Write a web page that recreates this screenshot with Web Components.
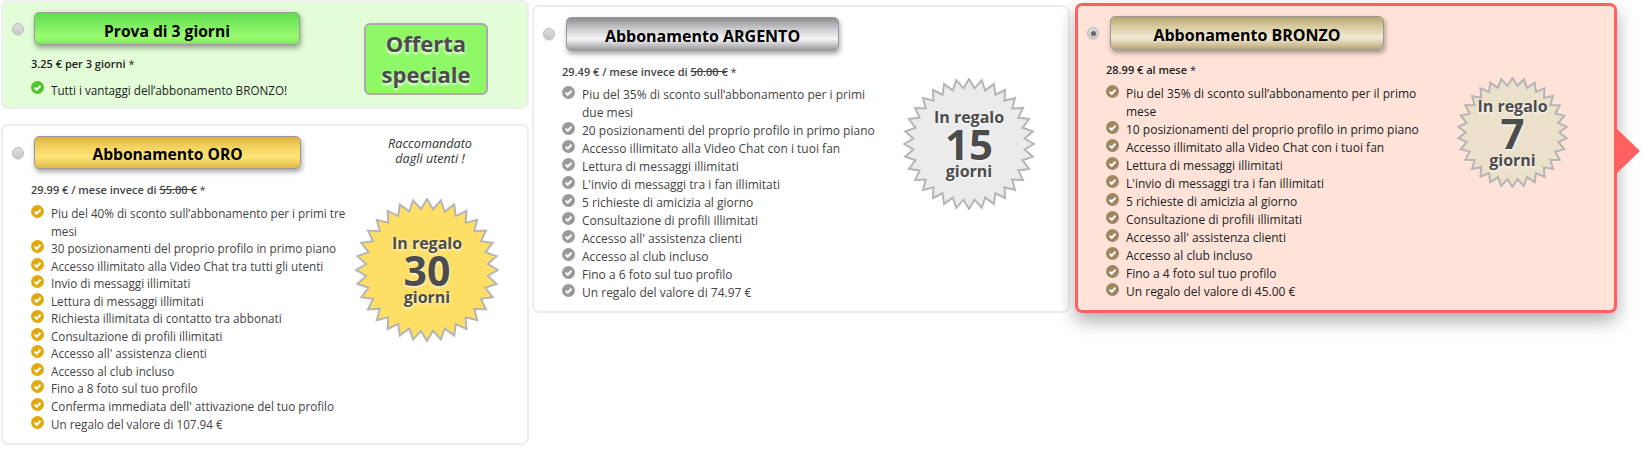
<!DOCTYPE html>
<html>
<head>
<meta charset="utf-8">
<style>
  html, body { margin: 0; background: #fff; }
  body { font-family: "Open Sans", sans-serif; width: 1642px; height: 466px; overflow: hidden; }
</style>
</head>
<body>
<plan-page>
  <div slot="one">
    <plan-card kind="trial" style="height:109px;width:528px">
      <plan-head title="Prova di 3 giorni" kind="trial" slot="head"></plan-head>
      <plan-price slot="price">3.25 € per 3 giorni <i>*</i></plan-price>
      <check-item color="#4fc52c">Tutti i vantaggi dell’abbonamento BRONZO!</check-item>
      <offer-box slot="over">Offerta<br>speciale</offer-box>
    </plan-card>
    <plan-card kind="gold" style="height:321px;width:528px;margin-top:15px">
      <plan-head title="Abbonamento ORO" kind="gold" slot="head"></plan-head>
      <plan-price slot="price">29.99 € / mese invece di <s>55.00 €</s> <i>*</i></plan-price>
      <check-item color="#e0aa0f">Piu del 40% di sconto sull’abbonamento per i primi tre mesi</check-item>
      <check-item color="#e0aa0f">30 posizionamenti del proprio profilo in primo piano</check-item>
      <check-item color="#e0aa0f">Accesso illimitato alla Video Chat tra tutti gli utenti</check-item>
      <check-item color="#e0aa0f">Invio di messaggi illimitati</check-item>
      <check-item color="#e0aa0f">Lettura di messaggi illimitati</check-item>
      <check-item color="#e0aa0f">Richiesta illimitata di contatto tra abbonati</check-item>
      <check-item color="#e0aa0f">Consultazione di profili illimitati</check-item>
      <check-item color="#e0aa0f">Accesso all' assistenza clienti</check-item>
      <check-item color="#e0aa0f">Accesso al club incluso</check-item>
      <check-item color="#e0aa0f">Fino a 8 foto sul tuo profilo</check-item>
      <check-item color="#e0aa0f">Conferma immediata dell' attivazione del tuo profilo</check-item>
      <check-item color="#e0aa0f">Un regalo del valore di 107.94 €</check-item>
      <span slot="over" style="position:absolute;left:362px;top:10px;width:130px;text-align:center;font:italic 12.6px/15px 'Open Sans',sans-serif;color:#333">Raccomandato<br>dagli utenti !</span>
      <gift-star slot="over" days="30" size="144" spikes="32" fill="#fddf66" num="41" style="left:352px;top:72px"></gift-star>
    </plan-card>
  </div>
  <plan-card slot="two" kind="silver" style="height:308px;width:538px">
    <plan-head title="Abbonamento ARGENTO" kind="silver" slot="head"></plan-head>
    <plan-price slot="price">29.49 € / mese invece di <s>50.00 €</s> <i>*</i></plan-price>
    <check-item color="#999">Piu del 35% di sconto sull’abbonamento per i primi due mesi</check-item>
    <check-item color="#999">20 posizionamenti del proprio profilo in primo piano</check-item>
    <check-item color="#999">Accesso illimitato alla Video Chat con i tuoi fan</check-item>
    <check-item color="#999">Lettura di messaggi illimitati</check-item>
    <check-item color="#999">L'invio di messaggi tra i fan illimitati</check-item>
    <check-item color="#999">5 richieste di amicizia al giorno</check-item>
    <check-item color="#999">Consultazione di profili illimitati</check-item>
    <check-item color="#999">Accesso all' assistenza clienti</check-item>
    <check-item color="#999">Accesso al club incluso</check-item>
    <check-item color="#999">Fino a 6 foto sul tuo profilo</check-item>
    <check-item color="#999">Un regalo del valore di 74.97 €</check-item>
    <gift-star slot="over" days="15" size="132" spikes="32" fill="#ebebeb" num="42" style="left:369px;top:71px"></gift-star>
  </plan-card>
  <plan-card slot="three" kind="bronze" style="height:310px;width:542px">
    <plan-head title="Abbonamento BRONZO" kind="bronze" checked slot="head"></plan-head>
    <plan-price slot="price">28.99 € al mese <i>*</i></plan-price>
    <check-item color="#a08660">Piu del 35% di sconto sull’abbonamento per il primo mese</check-item>
    <check-item color="#a08660">10 posizionamenti del proprio profilo in primo piano</check-item>
    <check-item color="#a08660">Accesso illimitato alla Video Chat con i tuoi fan</check-item>
    <check-item color="#a08660">Lettura di messaggi illimitati</check-item>
    <check-item color="#a08660">L'invio di messaggi tra i fan illimitati</check-item>
    <check-item color="#a08660">5 richieste di amicizia al giorno</check-item>
    <check-item color="#a08660">Consultazione di profili illimitati</check-item>
    <check-item color="#a08660">Accesso all' assistenza clienti</check-item>
    <check-item color="#a08660">Accesso al club incluso</check-item>
    <check-item color="#a08660">Fino a 4 foto sul tuo profilo</check-item>
    <check-item color="#a08660">Un regalo del valore di 45.00 €</check-item>
    <gift-star slot="over" days="7" size="111" spikes="30" fill="#ebe1cb" num="42" style="left:379px;top:71px"></gift-star>
  </plan-card>
</plan-page>

<script>
customElements.define('plan-page', class extends HTMLElement {
  constructor() {
    super();
    this.attachShadow({ mode: 'open' });
    this.shadowRoot.innerHTML = `
    <style>
      :host { display: flex; align-items: flex-start; padding-left: 1px; }
      .two { margin-left: 3px; padding-top: 5px; }
      .three { margin-left: 5px; padding-top: 3px; }
    </style>
    <div><slot name="one"></slot></div>
    <div class="two"><slot name="two"></slot></div>
    <div class="three"><slot name="three"></slot></div>
    `
  }
})

const cardSkins = {
  trial: 'background:#e3fdd8;border:2px solid #eee;--price-top:11px;--price-bottom:9px;--item-size:11.7px;',
  gold: 'background:#fff;border:2px solid #eee;--price-top:13px;--price-bottom:7px;--item-size:11.7px;--item-line:17.55px;',
  silver: 'background:#fff;border:2px solid #eee;--price-top:13px;--price-bottom:6px;',
  bronze: 'background:#ffe3d9;border:3px solid #ff6060;box-shadow:0 8px 18px rgba(0,0,0,.32);--price-top:12px;--price-bottom:7px;'
}

customElements.define('plan-card', class extends HTMLElement {
  constructor() {
    super();
    this.attachShadow({ mode: 'open' });
    const kind = this.getAttribute('kind')
    const arrow = kind == 'bronze' ? '<div class="arrow"></div>' : ''
    this.shadowRoot.innerHTML = `
    <style>
      :host { display: block; position: relative; box-sizing: border-box; border-radius: 7px; ${cardSkins[kind]} color: ${kind == 'bronze' || kind == 'trial' ? '#222' : '#444'}; }
      .body { padding: 10px 0 0 8px; }
      .rows { padding-left: 20px; width: 320px; }
      .arrow { position: absolute; right: -26px; top: 123px; width: 0; height: 0; border-left: 23px solid #ff6060; border-top: 22.5px solid transparent; border-bottom: 22.5px solid transparent; }
    </style>
    <div class="body">
      <slot name="head"></slot>
      <div class="rows">
        <slot name="price"></slot>
        <slot></slot>
      </div>
    </div>
    <slot name="over"></slot>
    ${arrow}
    `
  }
})

const buttonSkins = {
  trial: 'linear-gradient(#62dc50 0,#76e95c 30%,#9bfb70 78%,#7ce95f 100%)',
  gold: 'linear-gradient(#dfb440 0,#f2d05e 30%,#fee478 65%,#e0b744 100%)',
  silver: 'linear-gradient(#8c8c92 0,#c4c4c8 30%,#f6f6f8 65%,#9a9a9e 100%)',
  bronze: 'linear-gradient(#baa672 0,#d8cba0 30%,#f2ebd6 65%,#bba876 100%)'
}
const buttonBoxes = {
  trial: 'width:266px;height:33px;margin-left:1px;padding-top:4px;font-size:15.6px;',
  gold: 'width:267px;height:33px;margin-left:1px;padding-top:2px;font-size:15.6px;',
  silver: 'width:273px;height:34px;margin-left:2px;padding-top:4px;font-size:16px;',
  bronze: 'width:274px;height:34px;margin-left:2px;padding-top:4px;font-size:16px;'
}

customElements.define('plan-head', class extends HTMLElement {
  constructor() {
    super();
    this.attachShadow({ mode: 'open' });
    const kind = this.getAttribute('kind')
    const dot = this.hasAttribute('checked') ? '<span class="dot"></span>' : ''
    this.shadowRoot.innerHTML = `
    <style>
      :host { display: flex; align-items: center; gap: 9px; }
      .radio { box-sizing: border-box; width: 12px; height: 12px; border-radius: 50%; border: 1px solid #bbb; background: linear-gradient(#ddd,#c9c9c9); box-shadow: 0 1px 1px rgba(0,0,0,.12); display: flex; align-items: center; justify-content: center; margin-left: 1px; }
      .dot { width: 5px; height: 5px; border-radius: 50%; background: #666; }
      .btn { font-family: "Open Sans", sans-serif; font-weight: 700; ${buttonBoxes[kind]} box-sizing: border-box; border: 1px solid #9a9a9a; border-radius: 5px; background: ${buttonSkins[kind]}; box-shadow: 1px 3px 5px rgba(0,0,0,.35); display: flex; align-items: center; justify-content: center; color: #000; }
    </style>
    <span class="radio">${dot}</span>
    <div class="btn">${this.getAttribute('title')}</div>
    `
  }
})

customElements.define('plan-price', class extends HTMLElement {
  constructor() {
    super();
    this.attachShadow({ mode: 'open' });
    this.shadowRoot.innerHTML = `
    <style>
      :host { display: block; font: 600 11px/16px "Open Sans", sans-serif; margin: var(--price-top) 0 var(--price-bottom); }
      ::slotted(i) { font-style: normal; font-weight: 400; }
    </style>
    <slot></slot>
    `
  }
})

customElements.define('check-item', class extends HTMLElement {
  constructor() {
    super();
    this.attachShadow({ mode: 'open' });
    this.shadowRoot.innerHTML = `
    <style>
      :host { display: flex; gap: 7px; font: var(--item-size, 12px)/var(--item-line, 18px) "Open Sans", sans-serif; }
      svg { flex: none; width: 13px; height: 13px; }
    </style>
    <svg viewBox="0 0 13 13">
      <circle cx="6.5" cy="6.5" r="6.5" fill="${this.getAttribute('color')}"/>
      <path d="M3.6 6.6l2.1 2.1 3.8-4" fill="none" stroke="#fff" stroke-width="2"/>
    </svg>
    <span><slot></slot></span>
    `
  }
})

customElements.define('offer-box', class extends HTMLElement {
  constructor() {
    super();
    this.attachShadow({ mode: 'open' });
    this.shadowRoot.innerHTML = `
    <style>
      :host { position: absolute; left: 361px; top: 21px; width: 124px; height: 72px; box-sizing: border-box; border: 2px solid #aaa; border-radius: 6px; background: #8ef867; display: flex; align-items: center; justify-content: center; text-align: center; font: 700 22px/31px "Open Sans", sans-serif; color: #4c4c4c; text-shadow: 0 2px 3px #fff; }
    </style>
    <span><slot></slot></span>
    `
  }
})

customElements.define('gift-star', class extends HTMLElement {
  constructor() {
    super();
    this.attachShadow({ mode: 'open' });
    const size = +this.getAttribute('size')
    const c = size / 2, outer = c - 1, inner = outer * 0.86, n = +this.getAttribute('spikes')
    const pts = []
    for (let i = 0; i < n * 2; i++) {
      const r = i % 2 ? inner : outer
      const a = Math.PI * i / n - Math.PI / 2
      pts.push((c + r * Math.cos(a)).toFixed(1) + ',' + (c + r * Math.sin(a)).toFixed(1))
    }
    this.shadowRoot.innerHTML = `
    <style>
      :host { position: absolute; display: block; width: ${size}px; height: ${size}px; }
      svg { position: absolute; left: 0; top: 0; }
      .txt { position: absolute; inset: 0; display: flex; flex-direction: column; align-items: center; justify-content: center; color: #4c4c4c; font-weight: 700; text-shadow: 0 1px 3px #fff; white-space: nowrap; }
      .a { font-size: 16px; line-height: 18px; }
      .b { font-size: ${this.getAttribute('num')}px; line-height: 36px; }
    </style>
    <svg width="${size}" height="${size}"><polygon points="${pts.join(' ')}" fill="${this.getAttribute('fill')}" stroke="#b5b5b5" stroke-width="2"/></svg>
    <div class="txt"><span class="a">In regalo</span><span class="b">${this.getAttribute('days')}</span><span class="a">giorni</span></div>
    `
  }
})
</script>
</body>
</html>
